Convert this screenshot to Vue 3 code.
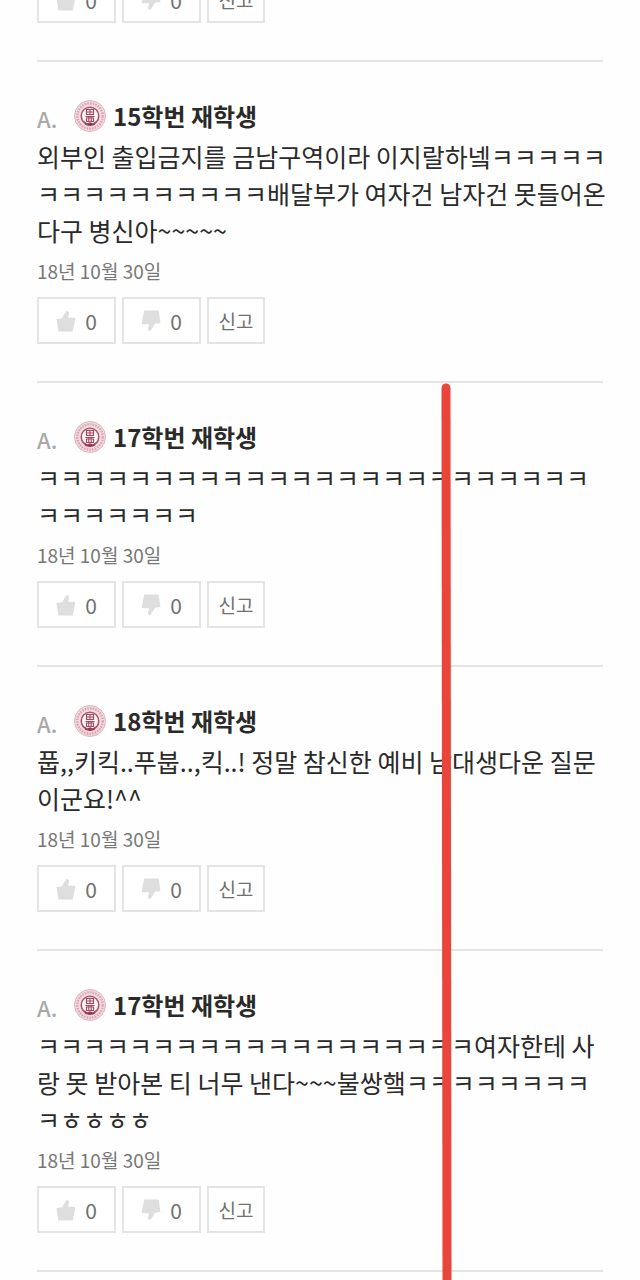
<template>
  <main class="page">
    <ul class="answers">
      <li v-for="item in answers" :key="item.id" class="answer">
        <template v-if="item.text">
          <div class="writer">
            <span class="mark">A.</span>
            <svg class="emblem" viewBox="0 0 32 32" aria-hidden="true">
              <circle cx="16" cy="16" r="15.5" fill="#f3dce1" stroke="#deb5be" stroke-width="1" />
              <circle
                cx="16"
                cy="16"
                r="12.7"
                fill="none"
                stroke="#d9a5b0"
                stroke-width="2.4"
                stroke-dasharray="1.6 1.1"
              />
              <circle cx="16" cy="16" r="8.8" fill="#fbf3f5" stroke="#a85468" stroke-width="1.5" />
              <path d="M10 21l3 2.6 3-1.4 3 1.4 3-2.6-1.4 4-4.6 1-4.6-1z" fill="#963a51" />
              <path
                d="M12.5 9.5h7v5h-7zM12.5 12h7M16 9.5v5M11.5 16.5h9M12.5 18h7v3.5h-7zM14.8 16.5v5M17.2 16.5v5"
                fill="none"
                stroke="#a3475d"
                stroke-width="1.1"
              />
            </svg>
            <strong class="name">{{ item.name }}</strong>
          </div>
          <p class="text">{{ item.text }}</p>
          <time class="date" datetime="2018-10-30">18년 10월 30일</time>
        </template>
        <div class="actions">
          <button type="button" class="btn" aria-label="추천" @click="item.up++">
            <svg class="thumb" viewBox="0 0 20 22" aria-hidden="true">
              <path d="M.5 9 6 8.2 10.4 1.2Q13.4.8 13 3.6L12 7.8h6q1.6 0 1.2 1.4L16.8 21.5H2.4z" />
            </svg>
            <span class="count">{{ item.up }}</span>
          </button>
          <button type="button" class="btn" aria-label="비추천" @click="item.down++">
            <svg class="thumb down" viewBox="0 0 20 22" aria-hidden="true">
              <path d="M.5 9 6 8.2 10.4 1.2Q13.4.8 13 3.6L12 7.8h6q1.6 0 1.2 1.4L16.8 21.5H2.4z" />
            </svg>
            <span class="count">{{ item.down }}</span>
          </button>
          <button type="button" class="btn report">신고</button>
        </div>
      </li>
    </ul>
    <svg class="marker" aria-hidden="true">
      <line x1="5" y1="5" x2="6" y2="100%" />
    </svg>
  </main>
</template>

<script setup>
import { reactive } from "vue";

const answers = reactive([
  { id: 1, name: "", text: "", up: 0, down: 0 },
  {
    id: 2,
    name: "15학번 재학생",
    text:
      "외부인 출입금지를 금남구역이라 이지랄하넼" +
      "ㅋ".repeat(15) +
      "배달부가 여자건 남자건 못들어온다구 병신아~~~~~",
    up: 0,
    down: 0,
  },
  { id: 3, name: "17학번 재학생", text: "ㅋ".repeat(31), up: 0, down: 0 },
  {
    id: 4,
    name: "18학번 재학생",
    text: "풉,,키킥..푸붑..,킥..! 정말 참신한 예비 남대생다운 질문이군요!^^",
    up: 0,
    down: 0,
  },
  {
    id: 5,
    name: "17학번 재학생",
    text:
      "ㅋ".repeat(19) +
      "여자한테 사랑 못 받아본 티 너무 낸다~~~불쌍햌" +
      "ㅋ".repeat(9) +
      "ㅎㅎㅎㅎ",
    up: 0,
    down: 0,
  },
]);
</script>

<style>
body {
  margin: 0;
  background: #fefefe;
}
</style>

<style scoped>
.page {
  position: relative;
  box-sizing: border-box;
  min-height: 100vh;
  padding: 0 37px;
  overflow: hidden;
  font-family: "Noto Sans CJK KR", "Noto Sans", sans-serif;
  color: #2a2a2a;
}

/* the list is scrolled, its first row is cut by the top edge */
.answers {
  list-style: none;
  margin: -24px 0 0;
  padding: 0;
}

.answer {
  padding-bottom: 37px;
  border-bottom: 2px solid #e4e4e4;
}

.answer + .answer {
  padding-top: 36px;
}

.writer {
  display: flex;
  align-items: center;
  height: 36px;
  margin-bottom: 4px;
}

.mark {
  width: 37px;
  padding-top: 4px;
  font-size: 22px;
  font-weight: 500;
  line-height: 32px;
  color: #a9a9a9;
}

.emblem {
  width: 32px;
  height: 32px;
  margin-right: 7px;
}

.name {
  font-size: 24px;
  font-weight: 700;
  line-height: 36px;
}

/* slightly wider than the rule, so a full line of text is not cut short */
.text {
  margin: 0 -6px 7px 0;
  font-size: 25px;
  line-height: 37px;
  word-break: break-all;
}

.date {
  display: block;
  margin-bottom: 11px;
  font-size: 19px;
  line-height: 30px;
  color: #777;
}

.actions {
  display: flex;
  gap: 6px;
}

.btn {
  display: flex;
  align-items: center;
  justify-content: center;
  gap: 9px;
  box-sizing: border-box;
  width: 79px;
  height: 47px;
  padding: 0;
  border: 2px solid #e4e4e4;
  background: #fff;
  font-family: inherit;
  font-size: 19px;
  color: #707070;
  cursor: pointer;
}

.report {
  width: 58px;
}

.count {
  font-size: 21px;
}

.thumb {
  width: 20px;
  height: 22px;
  fill: #dedede;
}

.down {
  transform: rotate(180deg);
}

/* red stroke drawn over the answers */
.marker {
  position: absolute;
  top: 383px;
  left: 441px;
  width: 12px;
  height: calc(100% - 383px);
  pointer-events: none;
}

.marker line {
  stroke: #e9453b;
  stroke-width: 9px;
  stroke-linecap: round;
}
</style>
